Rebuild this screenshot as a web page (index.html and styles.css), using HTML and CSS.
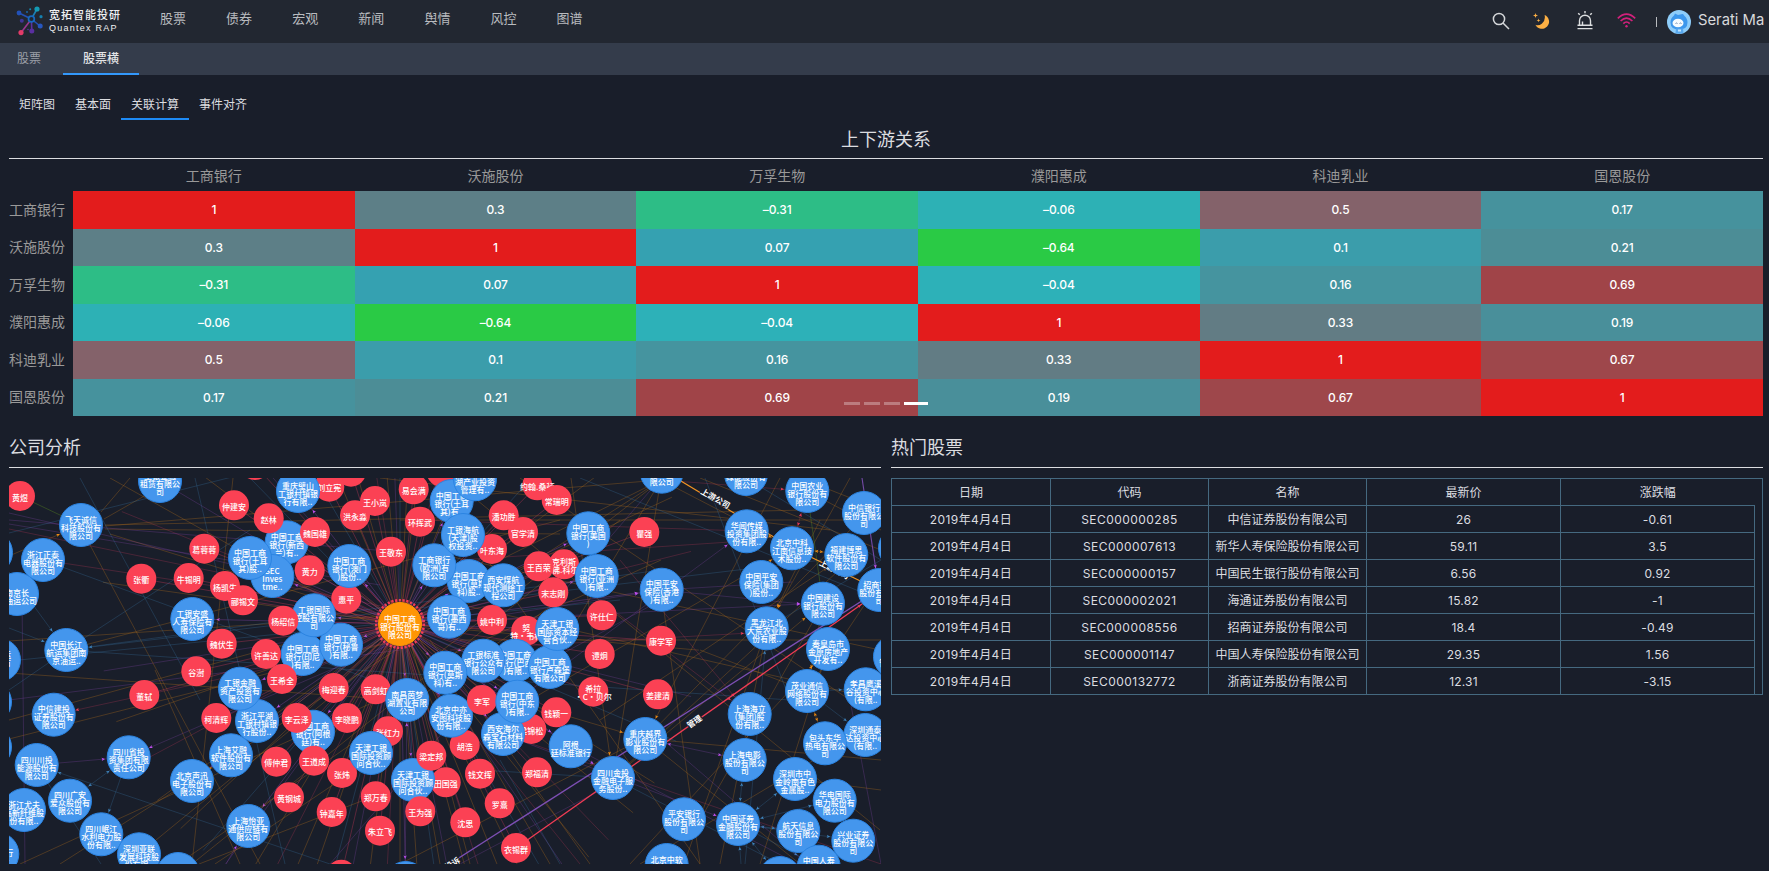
FILE: index.html
```html
<!DOCTYPE html>
<html lang="zh-CN">
<head>
<meta charset="utf-8">
<title>Quantex RAP</title>
<link rel="stylesheet" href="styles.css">
</head>
<body>
<header class="topbar">
  <div class="logo">
    <svg width="30" height="32" viewBox="15 5 30 32">
      <g stroke-width="1.6" fill="none">
        <path stroke="#1c7fb4" d="M31.4 19 37 9"/><path stroke="#2450b4" d="M31.4 19 19 13M31.4 19 40 26"/>
        <path stroke="#5b32a0" d="M31.4 19 31.8 30.7"/><path stroke="#9c3790" d="M31.4 19 21 32.7"/>
      </g>
      <circle cx="31.4" cy="19" r="2.9" fill="#222731" stroke="#1769c0" stroke-width="1.7"/>
      <circle cx="37" cy="9" r="2.6" fill="#159bb5"/><circle cx="19" cy="13" r="2.4" fill="#2251b8"/>
      <circle cx="40.2" cy="26" r="2.5" fill="#2757c0"/><circle cx="31.8" cy="30.9" r="2.5" fill="#5a2fa0"/>
      <circle cx="21" cy="32.6" r="2.6" fill="#e23b68"/><circle cx="41" cy="16.7" r="1.6" fill="#1580b0"/>
      <circle cx="30.2" cy="9.2" r="1" fill="#168ab0"/><circle cx="21.8" cy="20.8" r="2" fill="#3f3698"/>
      <circle cx="27" cy="12" r="1" fill="#1966a8"/><circle cx="28" cy="29.5" r=".8" fill="#5b32a0"/>
    </svg>
    <div class="brand"><span class="brand-cn">宽拓智能投研</span><span class="brand-en">Quantex RAP</span></div>
  </div>
  <nav class="mainnav"><a>股票</a><a>债券</a><a>宏观</a><a>新闻</a><a>舆情</a><a>风控</a><a>图谱</a></nav>
  <div class="tools">
    <svg class="t-search" width="18" height="18" viewBox="0 0 18 18" fill="none" stroke="#d5d7da" stroke-width="1.5"><circle cx="7" cy="7" r="5.6"/><path d="M11 11 17 17"/></svg>
    <svg class="t-moon" width="17" height="17" viewBox="0 0 17 17" fill="#fdb044"><path d="M11.600 2A7.200 7.200 0 1 1 2.400 11.800Q5.500 13.200 8.800 10.800 12.800 7.500 11.600 2Z"/><path d="M2.500 0 3.100 1.800 5 2.500 3.100 3.200 2.500 5 1.900 3.200 0 2.500 1.900 1.800ZM5.500 5.500 6 6.900 7.400 7.400 6 7.900 5.500 9.300 5 7.900 3.600 7.400 5 6.900Z"/></svg>
    <svg class="t-alarm" width="18" height="19" viewBox="0 0 18 19" fill="none" stroke="#dcdee0" stroke-width="1.4"><path d="M3.500 14V9.700a5.500 5.500 0 0 1 11 0V14M1.500 14.300h15M1.500 17.600h15M6.500 14v-3.500M9 0v2.300M2.200 2.200 3.800 3.800M15.800 2.200 14.200 3.800"/></svg>
    <svg class="t-wifi" width="19" height="15" viewBox="0 0 19 15" fill="none" stroke="#d3217c" stroke-width="1.7"><path d="M.8 5.300Q9.500-3.100 18.200 5.300M3.600 8Q9.500 2.400 15.400 8M6.300 10.600Q9.500 7.400 12.700 10.600"/><circle cx="9.500" cy="13.200" r="1.200" fill="#d3217c" stroke="none"/></svg>
    <span class="sep"></span>
    <svg class="t-avatar" width="24" height="24" viewBox="0 0 24 24"><circle cx="12" cy="12" r="12" fill="#8ecdfa"/><path d="M8 3.500 11 5q4-1 5-1l1.500 2q3 2.500 3 6.500 0 7-8.500 7T3.500 12.500Q3.500 8 7 5.500Z" fill="#3d97ec"/><ellipse cx="11" cy="13" rx="5.500" ry="4.300" fill="#f5fbff"/><path d="M8.500 13.500q1-1 2 0M12.500 13.500q1-1 2 0" stroke="#526d99" stroke-width=".8" fill="none"/><path d="M9 18.500h7l.5 4.500a11 11 0 0 1-8 0Z" fill="#58a8ef"/><path d="M11 19.500h3v2h-3z" fill="#bfe3fc"/></svg>
    <span class="user">Serati Ma</span>
  </div>
</header>
<div class="subbar"><a class="muted">股票</a><a class="on">股票横</a></div>
<nav class="tabs"><a>矩阵图</a><a>基本面</a><a class="on">关联计算</a><a>事件对齐</a></nav>
<main>
  <section class="heat">
    <h2>上下游关系</h2>
    <div class="heat-grid" id="heat"></div>
    <div class="dots"><i></i><i></i><i></i><i class="on"></i></div>
  </section>
  <div class="lower">
    <section class="panel">
      <h3>公司分析</h3>
      <svg class="graph" id="graph" width="872" height="386" viewBox="9 478 872 386"></svg>
    </section>
    <section class="panel">
      <h3>热门股票</h3>
      <div class="tablewrap">
        <table>
          <thead><tr><th class="c1">日期</th><th class="c2">代码</th><th class="c3">名称</th><th class="c4">最新价</th><th class="c5">涨跌幅</th><th class="gut"></th></tr></thead>
          <tbody>
            <tr><td>2019年4月4日</td><td>SEC000000285</td><td>中信证券股份有限公司</td><td>26</td><td>-0.61</td></tr>
            <tr><td>2019年4月4日</td><td>SEC000007613</td><td>新华人寿保险股份有限公司</td><td>59.11</td><td>3.5</td></tr>
            <tr><td>2019年4月4日</td><td>SEC000000157</td><td>中国民生银行股份有限公司</td><td>6.56</td><td>0.92</td></tr>
            <tr><td>2019年4月4日</td><td>SEC000002021</td><td>海通证券股份有限公司</td><td>15.82</td><td>-1</td></tr>
            <tr><td>2019年4月4日</td><td>SEC000008556</td><td>招商证券股份有限公司</td><td>18.4</td><td>-0.49</td></tr>
            <tr><td>2019年4月4日</td><td>SEC000001147</td><td>中国人寿保险股份有限公司</td><td>29.35</td><td>1.56</td></tr>
            <tr><td>2019年4月4日</td><td>SEC000132772</td><td>浙商证券股份有限公司</td><td>12.31</td><td>-3.15</td></tr>
          </tbody>
        </table>
      </div>
    </section>
  </div>
</main>
<script src="app.js"></script>
</body>
</html>
```

FILE: styles.css
```css
* { box-sizing: border-box; }
body { margin: 0; height: 871px; overflow: hidden; background: #191e2a; color: #dcdde0; font: 12px/1.2 Inter, "Noto Sans CJK SC", sans-serif; }
h2, h3 { margin: 0; font-weight: 400; font-size: 18px; }
.topbar { height: 43px; background: #222731; display: flex; }
.logo { display: flex; padding: 5px 0 0 15px; width: 140px; gap: 4px; }
.brand { display: flex; flex-direction: column; color: #f0f1f3; }
.brand-cn { font-size: 11px; line-height: 12px; letter-spacing: 1px; margin-top: 4px; font-weight: 500; white-space: nowrap; }
.brand-en { font: 500 9px/12px "Liberation Sans", sans-serif; letter-spacing: 1.25px; margin-top: 1px; white-space: nowrap; }
.mainnav { display: flex; }
.mainnav a { padding: 0 20px; font-size: 13px; line-height: 36px; width: 66.1px; color: #b9bbbf; white-space: nowrap; }
.tools { margin-left: auto; display: flex; align-items: center; padding-right: 3px; }
.t-moon { margin-left: 23px; }
.t-alarm { margin-left: 26px; }
.t-wifi { margin-left: 23px; }
.t-search, .t-alarm, .t-wifi { position: relative; top: -1px; }
.sep { width: 1px; height: 10px; background: #b9bbbf; margin: 0 10px 0 20px; }
.user { font-size: 14.800px; margin-left: 7px; width: 68px; white-space: nowrap; color: #d8d9db; line-height: 40px; height: 43px; }
.subbar { height: 32px; background: #343c4b; display: flex; padding-left: 17px; line-height: 32px; }
.subbar a { height: 32px; white-space: nowrap; }
.subbar .muted { color: #9b9fa7; width: 46px; }
.subbar .on { padding: 0 20px; border-bottom: 2px solid #3398fb; font-weight: 500; color: #e4e5e7; }
.tabs { display: flex; height: 45px; padding: 15px 9px 0; }
.tabs a { padding: 0 10px; line-height: 30px; height: 30px; white-space: nowrap; }
.tabs .on { border-bottom: 2px solid #1e8bf5; }
main { padding: 0 6px 0 9px; }
.heat { position: relative; }
.heat h2 { height: 39px; line-height: 39px; text-align: center; border-bottom: 1px solid #dcdde0; }
.heat-grid { display: grid; grid-template-columns: 64px repeat(6, 1fr); grid-template-rows: 32px repeat(6, 37.5px); }
.heat-grid div { display: flex; align-items: center; }
.heat-grid .col { justify-content: center; font-size: 14px; color: #999; padding-top: 2px; }
.heat-grid .row { font-size: 14px; color: #999; white-space: nowrap; padding-top: 1px; }
.heat-grid .cell { justify-content: center; color: #fff; font-weight: 500; letter-spacing: -.1px; padding-top: 1px; }
.dots { position: absolute; left: 834.5px; bottom: 11px; display: flex; gap: 4px; }
.dots i { width: 16px; height: 3px; background: #fff; opacity: .3; }
.dots .on { width: 24px; opacity: 1; }
.lower { display: grid; grid-template-columns: 1fr 1fr; gap: 10px; }
.panel { min-width: 0; }
.panel h3 { height: 52px; line-height: 64px; border-bottom: 1px solid #dcdde0; margin-bottom: 10px; }
.graph { display: block; font: 500 8px/8px "Noto Sans CJK SC", sans-serif; }
.graph text { fill: #fff; text-anchor: middle; }
.tablewrap { border-right: 1px solid #456980; height: 217px; border-top: 1px solid #456980; border-bottom: 1px solid #456980; }
table { border-collapse: collapse; table-layout: fixed; width: 872px; margin-top: -1px; }
th, td { height: 27px; padding: 2px 0 0; text-align: center; font-weight: 400; border: 1px solid #456980; white-space: nowrap; overflow: hidden; }
td:nth-child(1) { letter-spacing: .4px; }
td:nth-child(2) { letter-spacing: .45px; }
td:nth-child(4), td:nth-child(5) { letter-spacing: .2px; }
.c1 { width: 159px; } .c2 { width: 158px; } .c3 { width: 158px; } .c4 { width: 194px; } .c5 { width: 194px; border-right: 0; }
.gut { border-bottom: 0; border-left: 0; border-right: 0; }
```

FILE: app.js
```js
const names = ['工商银行', '沃施股份', '万孚生物', '濮阳惠成', '科迪乳业', '国恩股份'];
const matrix = [
  [1, 0.3, -0.31, -0.06, 0.5, 0.17],
  [0.3, 1, 0.07, -0.64, 0.1, 0.21],
  [-0.31, 0.07, 1, -0.04, 0.16, 0.69],
  [-0.06, -0.64, -0.04, 1, 0.33, 0.19],
  [0.5, 0.1, 0.16, 0.33, 1, 0.67],
  [0.17, 0.21, 0.69, 0.19, 0.67, 1]
];
const shades = {
  '1': '#e31c1c', '0.3': '#5d7f87', '-0.31': '#2dbd86', '-0.06': '#2db1b5', '0.5': '#84626a',
  '0.17': '#46929d', '0.07': '#35a1b1', '-0.64': '#2aca45', '0.1': '#3b9dab', '0.21': '#4c8d96',
  '-0.04': '#2db1b8', '0.16': '#45949f', '0.69': '#a04448', '0.33': '#627c84', '0.19': '#498f9a', '0.67': '#9e474b'
};
let heat = '<div></div>' + names.map(n => `<div class="col">${n}</div>`).join('');
matrix.forEach((r, i) => {
  heat += `<div class="row">${names[i]}</div>`;
  r.forEach(v => { heat += `<div class="cell" style="background:${shades[v]}">${String(v).replace('-', '–')}</div>`; });
});
document.getElementById('heat').innerHTML = heat;

// Company (b) and person (r) nodes: x, y, kind, label lines; later entries lie on top.
const nodes = `
20,496,r,黄煜
255,465,r,
81,525,b,飞天诚信|科技股份有|限公司
160,481,b,工银金融|租赁有限公|司
-9,552.5,b,限公司|有限公
43,560,b,浙江正泰|电器股份有|限公司
17,594,b,南京长|江油运公司
66.3,650,b,中国长江|航运集团南|京油运..
-1,660,b,中海运|股份有|限
141.3,578.7,r,张衢
188.7,578,r,牛锡明
204.3,548.7,r,葛蓉蓉
234,505.3,r,仲建安
286.7,542.3,b,中国工商|银行(新西|兰)有..
268.7,518.3,r,赵林
272.3,576,b,SEC|Inves|tme..
250,558,b,中国工商|银行(土耳|其)股..
225,586,r,杨凯生
243,600.3,r,郦锡文
315,532,r,魏国雄
309.7,570.3,r,黄力
351,471.7,r,尼·雯卡锡
329.3,486.7,r,刘立宪
298,491,b,重庆璧山|工银村镇银|行有限..
355,515.3,r,洪永淼
375,501,r,王小岚
346.3,598.7,r,惠平
349.3,566,b,中国工商|银行(澳门|)股份..
192.3,619,b,工银安盛|人寿保险有|限公司
302.7,654,b,中国工商|银行(印尼|)有限..
341,644.7,b,中国工商|银行(秘鲁|)有限..
314,615.3,b,工银国际|控股有限公|司
283.3,620.7,r,杨绍信
221.7,643.7,r,魏伏生
266,654,r,许善达
282,679,r,王希全
196.3,671.3,r,谷澍
144.3,695,r,董轼
216.3,718,r,柯清辉
257,721,b,浙江平湖|工银村镇银|行股份..
240,688.7,b,工银金融|资产投资有|限公司
231,755.3,b,上海艾融|软件股份有|限公司
192,781,b,北京声迅|电子股份有|限公司
53.7,714.7,b,中信建投|证券股份有|限公司
-10,702,b,
-10,747,b,
36.7,765,b,四川川投|能源股份有|限公司
128.7,757.3,b,四川省投|资集团有限|责任公司
70,800.7,b,四川广安|爱众股份有|限公司
24,810,b,浙江尤夫|高新纤维股|份有限..
101.3,834.3,b,四川岷江|水利电力股|份有限..
139,854.3,b,深圳亚联|发展科技股|份有限..
178,874,b,
-2.7,854,b,平安银行|有限公
248.3,826,b,上海怡亚|通供应链有|限公司
276.3,761.7,r,傅仲君
289,797.3,r,黄钢城
313,731.7,b,中国工商|银行(阿根|廷)有..
296.7,718,r,李云泽
314,760.7,r,王道成
333.7,688,r,梅迎春
347,718,r,李晓鹏
375.7,689.3,r,高剑虹
407.3,700,b,南昌茵梦|湖置业有限|公司
388,731.3,r,张红力
342,773,r,张炜
371,753,b,天津工银|国际投资顾|问合伙..
445.7,782.3,r,田国强
413,780,b,天津工银|国际投资顾|问合伙..
431.3,755.7,r,梁定邦
420.3,811.3,r,王为强
375.7,796.3,r,郑万春
331.7,812,r,钟嘉年
380,830.7,r,朱立飞
341.3,874.7,r,
405.7,883,b,
465.3,822.3,r,沈思
499.7,803.3,r,罗熹
480,773.7,r,钱文挥
537,772.3,r,郑福清
516,848,r,衣锡群
391,551.7,r,王敬东
413.7,489.3,r,易会满
420,521.7,r,环挥武
441.7,472,r,
451.7,501,b,中国工商|银行(土耳|其)有..
475,479.3,b,嘉兴南|湖产业投资|管理有..
492,549,r,叶东海
468.7,581,b,中国工商|银行(莫斯|科)股..
434.3,565.3,b,工商银行|(欧洲)有|限公司
463,535,b,工银海航|(天津)股|权投资..
503.3,585.3,b,西安煤航|现代测绘工|程公司
503.7,515.3,r,潘功胜
523,532,r,官学清
537.3,485.3,r,约翰.桑顿
556.7,500,r,常瑞明
588.3,533.3,b,中国工商|银行(美国|)
564,564.3,r,克利斯|.佛.科尔
538.7,566.3,r,王百荣
596.7,576,b,中国工商|银行(亚洲|)有限..
553.3,592.3,r,宋志刚
449,616.7,b,中国工商|银行(墨西|哥)有..
492,620,r,姚中利
526.3,630.7,r,努|特·韦林
515,660.7,b,中国工商|银行(巴西|)有限..
483.3,660.7,b,工银标准|银行公众有|限公司
549.7,667,b,中国工商|银行卢森堡|有限公司
557.3,629,b,天津工银|国际资本经|营合伙..
445.3,672.7,b,中国工商|银行(莫斯|科)有..
464.7,745,r,胡浩
451,715.7,b,北京中亦|安图科技股|份有限..
482,700,r,李军
531.3,729,r,梁锦松
503,734,b,西安海尔|森宝石材料|有限公司
517.3,701.7,b,中国工商|银行(中东|)有限..
556.3,712.3,r,钱颖一
570.7,746.3,b,阿根|廷标准银行
601.7,615.3,r,许仕仁
599.7,654,r,谭炯
593.3,691.7,r,希拉|·C·贝尔
658,694.3,r,姜建清
661,640.7,r,康学军
644.3,532,r,瞿强
661.7,471.7,b,科技股份|有|限公司
746,474,b,国投|绿能股份有|限公司
807.3,491,b,中国农业|银行股份有|限公司
864,513,b,中信银行|股份有限公|司
746.7,531.3,b,华闻传媒|投资集团股|份有限..
792,548.3,b,北京中科|江南信息技|术股份..
846.3,555,b,福建博思|软件股份有|限公司
900,548,b,
661.7,589.7,b,中国平安|保险(香港|)有限..
761.3,582,b,中国平安|保险(集团|)股份..
823,603.7,b,中国建设|银行股份有|限公司
879.3,590,b,招商银行|股份有限公|司
766.7,628.3,b,黑龙江北|大荒农业股|份有限..
828,649,b,秦皇岛市|金原房地产|开发有..
895,656.7,b,中信|管理有限
807,691,b,茂业通信|网络股份有|限公司
865.7,689.3,b,孝昌鹰溪|谷投资中心|(有限..
865.3,735,b,深圳通泰|达投资中心|(有限..
825,743.3,b,包头东华|热电有限公|司
749.7,714,b,上海海立|(集团)股|份有限..
744.7,760,b,上海电影|股份有限公|司
795,779,b,深圳市中|金岭南有色|金属股..
834.7,800.7,b,华电国际|电力股份有|限公司
798.3,831,b,航天信息|股份有限公|司
853.3,840.7,b,兴业证券|股份有限公|司
780,878,b,
818.7,866.7,b,中国人寿|保险|
738,824,b,中国证券|金融股份有|限公司
684,819.3,b,平安银行|股份有限公|司
666.7,865,b,北京中软|国际|
645.3,739,b,重庆越界|影业股份有|限公司
613,778,b,四川金投|金融电子服|务股份..
400,624,o,中国工商|银行股份有|限公司`.trim().split('\n').map(l => {
  const [x, y, kind, text] = l.split(',');
  return { x: +x, y: +y, kind, lines: text.split('|') };
});

const OR = '#a86a1c', BL = '#3c7fb0', PU = '#8a48b0', RE = '#d03a5c';
const bright = { [OR]: '#f08c12', [BL]: '#3f86c0', [PU]: '#c050f0', [RE]: '#f03c58' };
const alpha = { [OR]: 0.36, [BL]: 0.27, [PU]: 0.28, [RE]: 0.26 };
let out = '';
const line = (x1, y1, x2, y2, c, o = alpha[c] || 0.4, w = 1) =>
  `<line x1="${x1}" y1="${y1}" x2="${x2}" y2="${y2}" stroke="${c}" stroke-opacity="${o}" stroke-width="${w}"/>`;
const arrow = (x1, y1, x2, y2, c, gap = 22) => {
  const d = Math.hypot(x2 - x1, y2 - y1), a = Math.atan2(y2 - y1, x2 - x1) * 180 / Math.PI;
  const k = (d - gap) / d;
  return `<path d="M0 0-3.500-1.600-2.700 0-3.500 1.600Z" fill="${bright[c]}" transform="translate(${x1 + (x2 - x1) * k} ${y1 + (y2 - y1) * k}) rotate(${a})"/>`;
};

// Links between the bank in the middle and the companies and people round it.
const hub = { x: 400, y: 624 };
nodes.forEach(n => {
  const d = Math.hypot(n.x - hub.x, n.y - hub.y);
  if (n.kind === 'o' || d > 270) return;
  out += line(hub.x, hub.y, n.x, n.y, n.kind === 'r' ? RE : PU, 0.36);
  if (n.kind === 'b') out += arrow(hub.x, hub.y, n.x, n.y, PU, 24);
});
const fan = [-172, -158, -143, -131, -120, -113, -106, -99, -95, -92, -90, -87, -83, -76, -68, -59, -48, -37, -25, -14, 5, 14, 23, 32, 39, 46, 51, 56, 60, 64, 68, 72, 75, 79, 82, 86, 90, 93, 97, 101, 105, 109, 113, 117, 121, 126, 131, 137, 144, 152, 161, 171];
fan.forEach((a, i) => {
  const t = a * Math.PI / 180;
  out += line(hub.x, hub.y, hub.x + Math.cos(t) * 300, hub.y + Math.sin(t) * 300, [OR, RE, OR, PU, BL, OR][i % 6]);
});

// Long links that cross the canvas.
const links = [
  [105, 525, 807, 510, OR], [105, 526, 660, 480, OR], [105, 529, 560, 534, OR], [104, 519, 160, 487, OR], [101, 512, 130, 478, OR],
  [90, 545, 260, 864, OR], [9, 556, 81, 525, OR], [110, 534, 400, 624, OR], [110, 478, 400, 640, OR], [22, 598, 25, 864, PU],
  [9, 520, 400, 552, PU], [9, 529, 400, 610, RE], [9, 524, 380, 585, PU], [9, 513, 300, 580, PU], [9, 533, 240, 475, BL],
  [9, 572, 66, 650, BL], [9, 628, 66, 650, BL], [9, 690, 60, 655, BL], [9, 641, 400, 615, OR], [9, 673, 400, 700, OR],
  [9, 661, 620, 600, BL], [9, 700, 400, 650, PU], [9, 739, 400, 640, OR], [66, 650, 661, 570, BL], [66, 650, 822, 560, BL],
  [66, 650, 790, 700, BL], [66, 650, 560, 520, OR], [66, 650, 250, 530, BL], [43, 560, 400, 690, BL], [43, 560, 240, 590, RE],
  [160, 481, 400, 624, PU], [195, 478, 285, 864, BL], [250, 478, 330, 560, BL], [233, 478, 192, 864, OR], [155, 670, 240, 864, OR],
  [20, 864, 400, 690, OR], [60, 864, 231, 755, OR], [139, 854, 400, 640, OR], [178, 864, 560, 600, OR], [192, 864, 620, 520, OR],
  [215, 864, 400, 740, OR], [231, 755, 400, 624, OR], [192, 781, 661, 480, OR], [36, 765, 330, 864, BL], [36, 765, 101, 864, BL],
  [128, 757, 101, 834, BL], [128, 757, 70, 800, BL], [36, 765, 128, 757, PU], [128, 757, 400, 640, PU], [53, 715, 400, 640, RE],
  [199, 864, 390, 790, OR], [248, 826, 226, 864, PU], [330, 864, 661, 478, PU], [80, 478, 200, 700, BL], [9, 720, 300, 640, OR],
  [380, 478, 830, 530, OR], [430, 478, 700, 864, OR], [450, 478, 880, 830, OR], [520, 478, 850, 700, OR], [400, 520, 881, 520, OR],
  [420, 550, 880, 650, OR], [440, 600, 881, 700, OR], [460, 560, 760, 540, RE], [460, 640, 881, 640, OR], [660, 740, 881, 760, OR],
  [613, 778, 661, 478, OR], [571, 478, 613, 778, OR], [613, 778, 850, 560, OR], [613, 778, 823, 603, OR], [645, 739, 860, 520, OR],
  [645, 739, 780, 478, OR], [645, 739, 480, 690, OR], [549, 667, 661, 480, OR], [440, 660, 661, 560, OR], [490, 720, 746, 531, PU],
  [530, 700, 792, 548, OR], [480, 620, 823, 603, PU], [661, 590, 792, 582, PU], [661, 590, 823, 606, PU], [661, 590, 470, 620, PU],
  [600, 720, 846, 555, OR], [450, 715, 661, 600, PU], [503, 734, 738, 824, PU], [503, 734, 881, 864, RE], [571, 746, 798, 864, PU],
  [613, 778, 780, 864, BL], [613, 778, 480, 770, BL], [645, 739, 800, 864, OR], [645, 739, 744, 760, PU], [661, 590, 700, 864, OR],
  [767, 628, 684, 864, OR], [767, 628, 720, 864, OR], [767, 628, 745, 864, BL], [767, 628, 850, 478, OR], [767, 628, 881, 560, BL],
  [767, 628, 820, 520, OR], [738, 824, 795, 779, BL], [738, 824, 834, 800, BL], [738, 824, 798, 831, BL], [738, 824, 853, 840, BL],
  [738, 824, 818, 866, BL], [738, 824, 780, 878, BL], [738, 824, 744, 760, BL], [738, 824, 741, 864, BL], [823, 604, 700, 820, OR],
  [823, 604, 807, 691, OR], [828, 649, 760, 864, OR], [828, 649, 630, 864, OR], [807, 691, 865, 689, BL], [807, 691, 865, 735, BL],
  [807, 691, 700, 650, OR], [807, 691, 881, 580, OR], [825, 743, 807, 691, OR], [807, 491, 823, 604, '#5a8a20'], [20, 496, 81, 525, '#5a8a20'],
  [807, 491, 792, 548, RE], [807, 491, 881, 530, OR], [746, 531, 420, 520, RE], [746, 478, 881, 560, BL], [700, 478, 881, 550, OR],
  [705, 478, 790, 700, BL], [661, 480, 807, 491, RE], [580, 478, 881, 600, BL], [661, 480, 500, 560, OR], [661, 480, 430, 660, OR],
  [661, 480, 792, 548, OR], [620, 560, 749, 714, RE], [600, 600, 749, 714, RE], [450, 650, 767, 632, RE], [640, 720, 807, 864, PU],
  [850, 700, 881, 864, PU], [640, 864, 881, 720, OR], [795, 779, 881, 790, OR], [460, 864, 620, 780, PU], [400, 864, 640, 740, OR],
  [440, 864, 400, 640, OR], [470, 864, 410, 640, OR], [550, 864, 420, 640, OR], [590, 864, 430, 640, OR], [580, 864, 480, 740, RE],
  [405, 883, 407, 700, PU], [413, 780, 407, 640, BL], [560, 864, 500, 760, BL], [800, 478, 881, 510, OR], [846, 555, 792, 548, OR]
];
links.forEach(([a, b, c, d, col]) => {
  out += line(a, b, c, d, col);
  if (bright[col] && nodes.some(n => n.kind === 'b' && Math.hypot(n.x - c, n.y - d) < 4)) out += arrow(a, b, c, d, col, 23);
  if (bright[col] && nodes.some(n => n.kind === 'b' && Math.hypot(n.x - a, n.y - b) < 4) && (a + c) % 3 === 0) out += arrow(c, d, a, b, col, 23);
});

// Highlighted links with captions.
out += line(661, 469, 792, 548, '#f29422', 1, 1.2) + line(792, 548, 879, 590, '#f29422', 1, 1.2);
out += line(440, 870, 879, 590, '#7d4fb4', 1, 1.3) + line(516, 848, 879, 592, '#f03c55', 1, 1.3);
out += line(862, 478, 879, 590, '#7d4fb4', 0.9, 1.1) + arrow(862, 478, 879, 590, PU, 22) + arrow(516, 848, 879, 592, RE, 22);
const caption = (x, y, a, t) => `<text x="${x}" y="${y}" stroke="#191e2a" stroke-width="2" paint-order="stroke" font-weight="700" transform="rotate(${a} ${x} ${y})">${t}</text>`;
out += caption(714, 501, 29, '上游公司') + caption(833, 572, 27, '上游公司') + caption(696, 724, -35, '管理') + caption(454, 866, -32, '投诉');

const fill = { b: '#4496ed', r: '#fb4154', o: '#ff9505' }, edge = { b: '#2b84e2', r: '#fb4154', o: '#ff9505' };
out += `<circle cx="400" cy="624" r="23.800" fill="none" stroke="#f03c58" stroke-width="2.600" stroke-dasharray="2.200 1.600"/>`;
nodes.forEach(n => {
  out += `<circle cx="${n.x}" cy="${n.y}" r="${n.kind === 'r' ? 15 : 21.5}" fill="${fill[n.kind]}" stroke="${edge[n.kind]}" stroke-width="${n.kind === 'r' ? 0 : 1}"/>`;
  const base = n.lines.length === 3 ? -2.4 : n.lines.length === 2 ? (n.kind === 'r' ? 0.6 : 1.6) : 4.6;
  n.lines.forEach((t, i) => { if (t) out += `<text x="${n.x}" y="${n.y + base + i * 8}">${t}</text>`; });
});
document.getElementById('graph').innerHTML = out;
```
